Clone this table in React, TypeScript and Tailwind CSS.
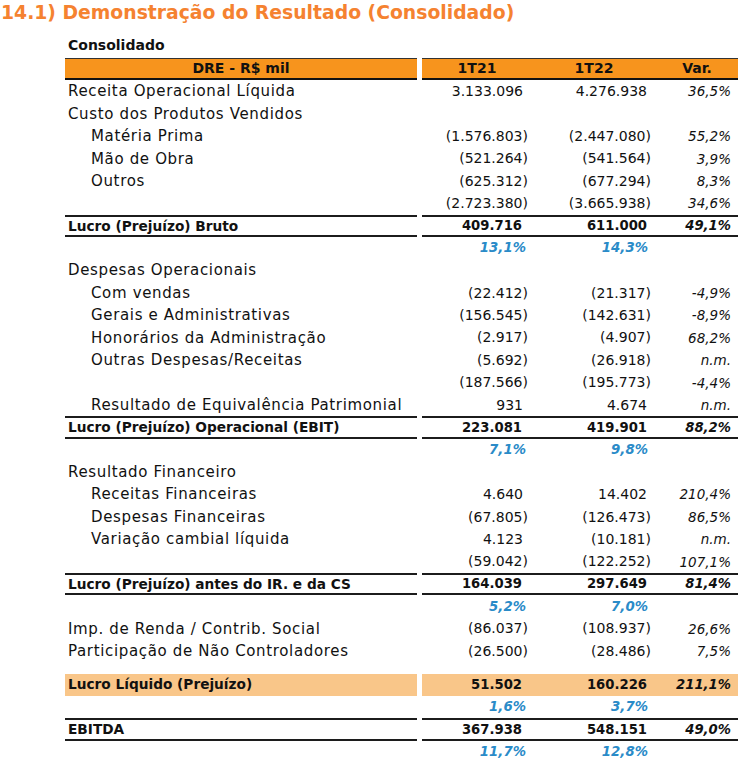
import React from "react";

type Row = {
  kind: "normal" | "sub" | "bold" | "margin" | "blank" | "net";
  label?: string;
  indent?: boolean;
  a?: string;
  b?: string;
  v?: string;
};

const rows: Row[] = [
  { kind: "normal", label: "Receita Operacional Líquida", a: "3.133.096", b: "4.276.938", v: "36,5%" },
  { kind: "normal", label: "Custo dos Produtos Vendidos" },
  { kind: "normal", label: "Matéria Prima", indent: true, a: "(1.576.803)", b: "(2.447.080)", v: "55,2%" },
  { kind: "normal", label: "Mão de Obra", indent: true, a: "(521.264)", b: "(541.564)", v: "3,9%" },
  { kind: "normal", label: "Outros", indent: true, a: "(625.312)", b: "(677.294)", v: "8,3%" },
  { kind: "normal", label: "", a: "(2.723.380)", b: "(3.665.938)", v: "34,6%" },
  { kind: "bold", label: "Lucro (Prejuízo) Bruto", a: "409.716", b: "611.000", v: "49,1%" },
  { kind: "margin", a: "13,1%", b: "14,3%" },
  { kind: "normal", label: "Despesas Operacionais" },
  { kind: "normal", label: "Com vendas", indent: true, a: "(22.412)", b: "(21.317)", v: "-4,9%" },
  { kind: "normal", label: "Gerais e Administrativas", indent: true, a: "(156.545)", b: "(142.631)", v: "-8,9%" },
  { kind: "normal", label: "Honorários da Administração", indent: true, a: "(2.917)", b: "(4.907)", v: "68,2%" },
  { kind: "normal", label: "Outras Despesas/Receitas", indent: true, a: "(5.692)", b: "(26.918)", v: "n.m." },
  { kind: "normal", label: "", a: "(187.566)", b: "(195.773)", v: "-4,4%" },
  { kind: "normal", label: "Resultado de Equivalência Patrimonial", indent: true, a: "931", b: "4.674", v: "n.m." },
  { kind: "bold", label: "Lucro (Prejuízo) Operacional (EBIT)", a: "223.081", b: "419.901", v: "88,2%" },
  { kind: "margin", a: "7,1%", b: "9,8%" },
  { kind: "normal", label: "Resultado Financeiro" },
  { kind: "normal", label: "Receitas Financeiras", indent: true, a: "4.640", b: "14.402", v: "210,4%" },
  { kind: "normal", label: "Despesas Financeiras", indent: true, a: "(67.805)", b: "(126.473)", v: "86,5%" },
  { kind: "normal", label: "Variação cambial líquida", indent: true, a: "4.123", b: "(10.181)", v: "n.m." },
  { kind: "normal", label: "", a: "(59.042)", b: "(122.252)", v: "107,1%" },
  { kind: "bold", label: "Lucro (Prejuízo) antes do IR. e da CS", a: "164.039", b: "297.649", v: "81,4%" },
  { kind: "margin", a: "5,2%", b: "7,0%" },
  { kind: "normal", label: "Imp. de Renda / Contrib. Social", a: "(86.037)", b: "(108.937)", v: "26,6%" },
  { kind: "normal", label: "Participação de Não Controladores", a: "(26.500)", b: "(28.486)", v: "7,5%" },
  { kind: "blank" },
  { kind: "net", label: "Lucro Líquido (Prejuízo)", a: "51.502", b: "160.226", v: "211,1%" },
  { kind: "margin", a: "1,6%", b: "3,7%" },
  { kind: "bold", label: "EBITDA", a: "367.938", b: "548.151", v: "49,0%" },
  { kind: "margin", a: "11,7%", b: "12,8%" },
];

function Num({ value, w, col, kind }: { value?: string; w: string; col: "a" | "b"; kind: Row["kind"] }) {
  const v = value ?? "";
  const neg = v.startsWith("(");
  let pad = "";
  let cls = "";
  if (kind === "margin") {
    pad = col === "a" ? "pr-[6px]" : "pr-[8px]";
    cls = "italic font-bold text-[13.3px] text-[#2a8bc8]";
  } else if (kind === "bold" || kind === "net") {
    pad = col === "a" ? "pr-[10px]" : "pr-[9px]";
    cls = "font-bold text-[13.2px] text-[#111]";
  } else {
    pad = neg ? (col === "a" ? "pr-[4px]" : "pr-[5px]") : "pr-[9px]";
    cls = "text-[14px] text-[#111]";
  }
  return (
    <div className={`${w} flex items-center justify-end ${cls}`}>
      <span className={pad}>{v}</span>
    </div>
  );
}

function TableRow({ r }: { r: Row }) {
  if (r.kind === "blank") return <div className="h-[11px]" />;
  const isBold = r.kind === "bold" || r.kind === "net";
  const border = r.kind === "bold" ? "border-y-2 border-[#1c1c1c]" : "";
  const bg = r.kind === "net" ? "bg-[#f9c689]" : "";
  return (
    <div className="flex h-[22.4px]">
      <div className={`w-[352px] flex items-center ${border} ${bg}`}>
        <span
          className={`${r.indent ? "pl-[26px]" : "pl-[3px]"} whitespace-nowrap ${
            isBold ? "font-bold text-[13.7px]" : "text-[15px] tracking-[0.65px]"
          } text-[#111]`}
        >
          {r.label}
        </span>
      </div>
      <div className="w-[5px]" />
      <div className={`w-[316px] flex ${border} ${bg}`}>
        <Num value={r.a} w="w-[110px]" col="a" kind={r.kind} />
        <Num value={r.b} w="w-[124px]" col="b" kind={r.kind} />
        <div
          className={`w-[82px] flex items-center justify-end pr-[7px] italic ${
            isBold ? "font-bold text-[13.2px]" : "text-[13.5px]"
          } text-[#111]`}
        >
          {r.v}
        </div>
      </div>
    </div>
  );
}

export default function App() {
  return (
    <div className="w-[753px] h-[772px] bg-white overflow-hidden" style={{ fontFamily: '"DejaVu Sans", sans-serif' }}>
      <div className="h-[30px] flex items-start">
        <h1 className="text-[18.8px] leading-[26px] font-bold text-[#f58230] pl-[1px]">
          14.1) Demonstração do Resultado (Consolidado)
        </h1>
      </div>
      <div className="ml-[65px] w-[673px] text-[14px]">
        <div className="h-[28px] flex items-end pb-[2px] pl-[3px] font-bold text-[#111]">Consolidado</div>
        <div className="flex h-[22.4px] font-bold text-[#111]">
          <div className="w-[352px] flex items-center justify-center bg-[#f7941d] border-t border-t-[#333] border-b-2 border-b-[#111]">
            DRE - R$ mil
          </div>
          <div className="w-[5px]" />
          <div className="w-[316px] flex bg-[#f7941d] border-t border-t-[#333] border-b-2 border-b-[#111]">
            <div className="w-[110px] flex items-center justify-center">1T21</div>
            <div className="w-[124px] flex items-center justify-center">1T22</div>
            <div className="w-[82px] flex items-center justify-center">Var.</div>
          </div>
        </div>
        {rows.map((r, i) => (
          <TableRow key={i} r={r} />
        ))}
      </div>
    </div>
  );
}
